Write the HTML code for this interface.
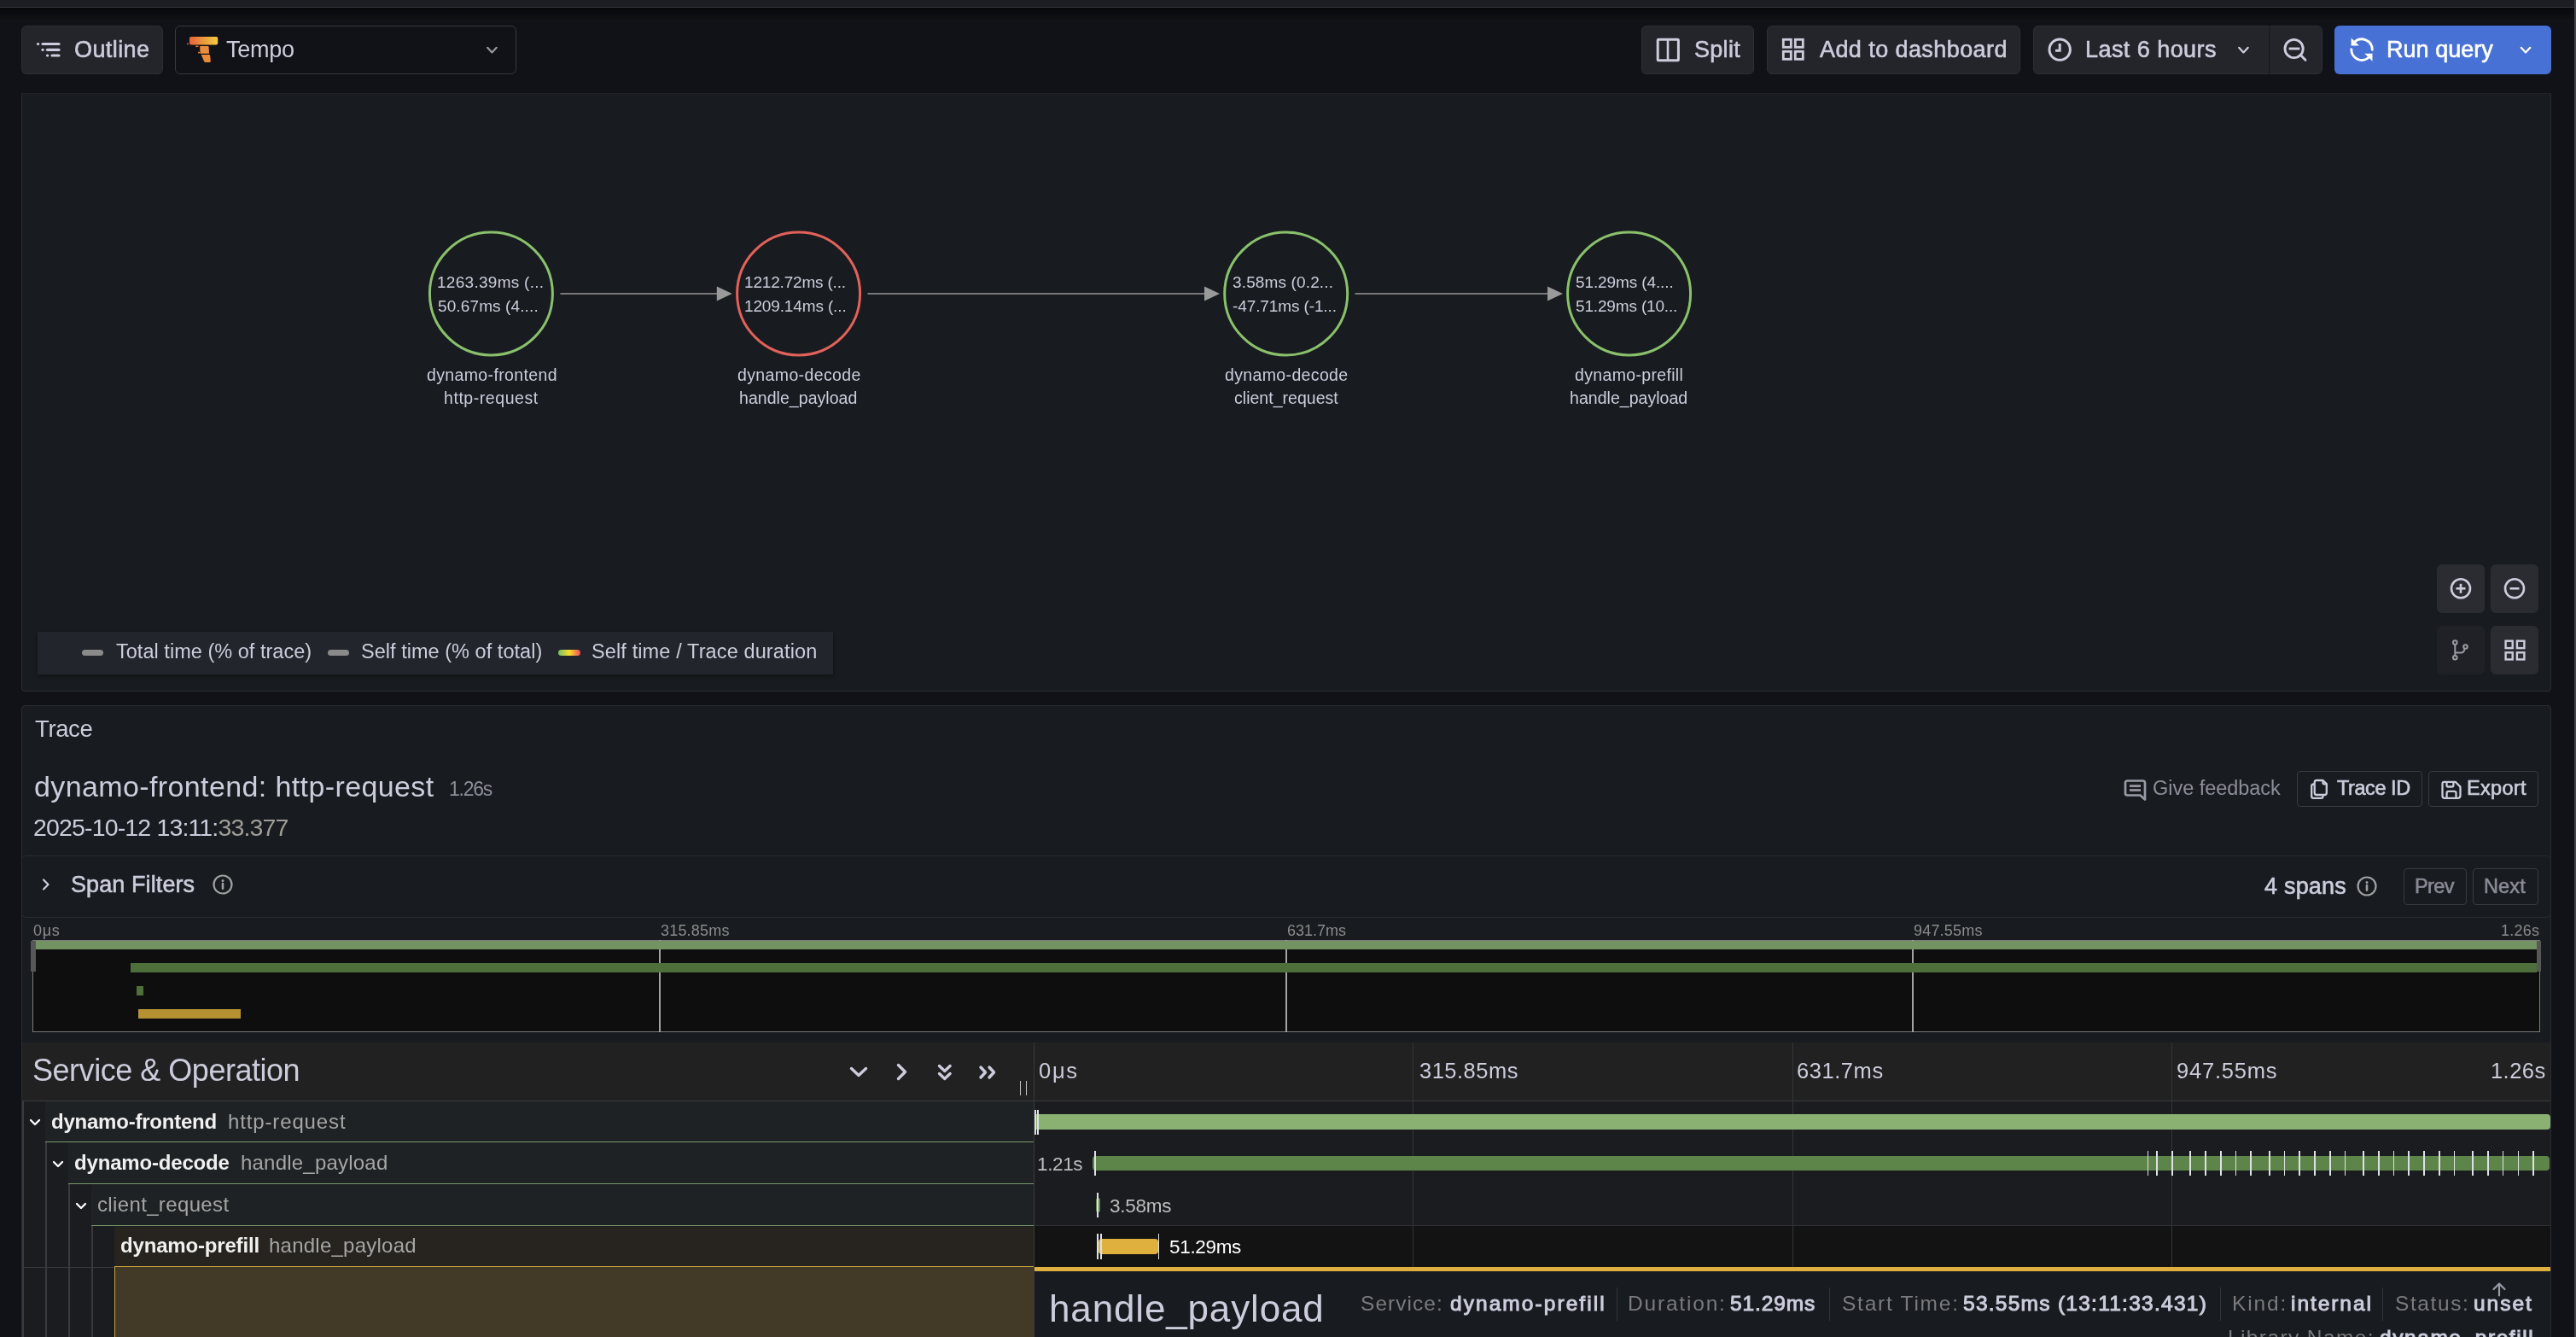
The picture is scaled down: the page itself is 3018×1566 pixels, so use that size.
<!DOCTYPE html>
<html><head><meta charset="utf-8"><style>
html,body{margin:0;padding:0;}
body{width:3018px;height:1566px;overflow:hidden;position:relative;background:#111217;font-family:"Liberation Sans",sans-serif;}
.t{position:absolute;white-space:nowrap;will-change:transform;font-family:"Liberation Sans",sans-serif;}
</style></head><body>
<div style="position:absolute;left:0.00px;top:0.00px;width:3018.00px;height:8.00px;background:#1d1e23"></div>
<div style="position:absolute;left:0.00px;top:8.00px;width:3018.00px;height:1.00px;background:#36373c"></div>
<div style="position:absolute;left:0.00px;top:9.00px;width:3018.00px;height:16.00px;background:linear-gradient(rgba(0,0,0,0.55),rgba(0,0,0,0))"></div>
<div style="position:absolute;left:25.00px;top:30.00px;width:166.00px;height:57.00px;background:#24252b;border:1px solid #2d2e34;border-radius:6px;box-sizing:border-box"></div>
<svg style="position:absolute;left:40.00px;top:44.00px;" width="34.00" height="28.00" viewBox="0 0 34 28" fill="none"><g stroke="#ccccdc" stroke-width="3.2" stroke-linecap="round"><line x1="4.5" y1="7.5" x2="4.6" y2="7.5"/><line x1="10" y1="7.5" x2="29" y2="7.5"/><line x1="10" y1="14.3" x2="10.1" y2="14.3"/><line x1="15.5" y1="14.3" x2="29" y2="14.3"/><line x1="15.5" y1="21" x2="15.6" y2="21"/><line x1="21" y1="21" x2="29" y2="21"/></g></svg>
<div class="t" style="left:87.00px;top:44.80px;font-size:27px;line-height:27px;letter-spacing:0.411px;color:#ccccdc;font-weight:400;;-webkit-text-stroke:0.60px #ccccdc">Outline</div>
<div style="position:absolute;left:205.00px;top:30.00px;width:400.00px;height:57.00px;border:1px solid #37383e;border-radius:6px;box-sizing:border-box"></div>
<svg style="position:absolute;left:217.00px;top:42.00px;" width="40.00" height="32.00" viewBox="0 0 40 32" fill="none"><defs><linearGradient id="tg" x1="0" x2="1" y1="0" y2="0"><stop offset="0" stop-color="#e9623a"/><stop offset="0.5" stop-color="#eb9a3c"/><stop offset="1" stop-color="#f4ca44"/></linearGradient></defs><rect x="5" y="0.9" width="33.2" height="9.5" rx="1.8" fill="url(#tg)"/><path d="M17.2 11.9 H26.3 Q27.5 11.9 27.6 13.2 L28 20.8 H17.5 Z" fill="#e98d3a"/><path d="M18.7 21.9 H27.8 Q29 21.9 29.2 23.2 L29.8 29.8 Q29.8 30.9 28.8 30.9 H23.6 Q22.4 30.9 22 29.8 Z" fill="#e98a3a"/><ellipse cx="3" cy="9.3" rx="1.1" ry="0.9" fill="#ea6a38"/><ellipse cx="13.8" cy="12.35" rx="1.9" ry="0.8" fill="#ea7a38"/><ellipse cx="16" cy="19.65" rx="1.2" ry="0.8" fill="#ea8238"/></svg>
<div class="t" style="left:264.80px;top:44.70px;font-size:27px;line-height:27px;letter-spacing:-0.231px;color:#ccccdc;font-weight:400;">Tempo</div>
<svg style="position:absolute;left:566.00px;top:52.00px;" width="20.00" height="14.00" viewBox="0 0 20 14" fill="none"><path d="M5.2 3.8 L10.4 9.4 L15.7 3.8" stroke="#9898a3" stroke-width="2.2" stroke-linecap="round" stroke-linejoin="round"/></svg>
<div style="position:absolute;left:1923.00px;top:30.00px;width:132.00px;height:57.00px;background:#24252b;border:1px solid #2d2e34;border-radius:6px;box-sizing:border-box"></div>
<svg style="position:absolute;left:1939.00px;top:43.00px;" width="30.00" height="31.00" viewBox="0 0 30 31" fill="none"><rect x="3.2" y="3.3" width="24.2" height="24.5" rx="1" stroke="#ccccdc" stroke-width="3"/><line x1="15" y1="3" x2="15" y2="28" stroke="#ccccdc" stroke-width="2.6"/></svg>
<div class="t" style="left:1984.80px;top:44.70px;font-size:27px;line-height:27px;letter-spacing:0.295px;color:#ccccdc;font-weight:400;;-webkit-text-stroke:0.60px #ccccdc">Split</div>
<div style="position:absolute;left:2070.00px;top:30.00px;width:297.00px;height:57.00px;background:#24252b;border:1px solid #2d2e34;border-radius:6px;box-sizing:border-box"></div>
<svg style="position:absolute;left:2086.00px;top:43.00px;" width="30.00" height="30.00" viewBox="0 0 30 30" fill="none"><g stroke="#ccccdc" stroke-width="2.8" fill="none"><rect x="3.3" y="3.3" width="9" height="9"/><rect x="17.3" y="3.3" width="9" height="9"/><rect x="3.3" y="17.3" width="9" height="9"/><rect x="17.3" y="17.3" width="9" height="9"/></g></svg>
<div class="t" style="left:2132.00px;top:44.70px;font-size:27px;line-height:27px;letter-spacing:0.417px;color:#ccccdc;font-weight:400;;-webkit-text-stroke:0.60px #ccccdc">Add to dashboard</div>
<div style="position:absolute;left:2382.00px;top:30.00px;width:339.00px;height:57.00px;background:#24252b;border:1px solid #2d2e34;border-radius:6px;box-sizing:border-box"></div>
<div style="position:absolute;left:2658.00px;top:30.00px;width:1.00px;height:57.00px;background:#17181c"></div>
<svg style="position:absolute;left:2397.00px;top:42.00px;" width="32.00" height="32.00" viewBox="0 0 32 32" fill="none"><circle cx="16.2" cy="16.1" r="12.2" stroke="#ccccdc" stroke-width="3"/><path d="M11 17.2 H16.2 V9" stroke="#ccccdc" stroke-width="3" fill="none"/></svg>
<div class="t" style="left:2442.70px;top:44.80px;font-size:27px;line-height:27px;letter-spacing:0.446px;color:#ccccdc;font-weight:400;;-webkit-text-stroke:0.60px #ccccdc">Last 6 hours</div>
<svg style="position:absolute;left:2619.00px;top:52.00px;" width="20.00" height="14.00" viewBox="0 0 20 14" fill="none"><path d="M4.2 3.8 L9.4 9.4 L14.7 3.8" stroke="#d0d0de" stroke-width="2.2" stroke-linecap="round" stroke-linejoin="round"/></svg>
<svg style="position:absolute;left:2673.00px;top:42.00px;" width="32.00" height="32.00" viewBox="0 0 32 32" fill="none"><circle cx="14.6" cy="15" r="10.6" stroke="#ccccdc" stroke-width="2.9"/><line x1="8.6" y1="15" x2="21.4" y2="15" stroke="#ccccdc" stroke-width="2.9"/><line x1="22.4" y1="22.6" x2="28" y2="28.3" stroke="#ccccdc" stroke-width="2.9" stroke-linecap="round"/></svg>
<div style="position:absolute;left:2735.00px;top:30.00px;width:254.00px;height:57.00px;background:#4871d6;border-radius:6px"></div>
<svg style="position:absolute;left:2751.00px;top:42.00px;" width="32.00" height="32.00" viewBox="0 0 32 32" fill="none"><path d="M7.2 7.6 A12.3 12.3 0 0 1 28.3 16.3" stroke="#fff" stroke-width="2.9" stroke-linecap="round"/><path d="M3.8 15.8 A12.3 12.3 0 0 0 25 24.6" stroke="#fff" stroke-width="2.9" stroke-linecap="round"/><path d="M3.6 2.4 V11.6 H13 Z" fill="#fff"/><path d="M28.5 29.8 V20.8 H19.3 Z" fill="#fff"/></svg>
<div class="t" style="left:2796.40px;top:44.80px;font-size:27px;line-height:27px;letter-spacing:0.029px;color:#ffffff;font-weight:400;;-webkit-text-stroke:0.60px #ffffff">Run query</div>
<svg style="position:absolute;left:2949.00px;top:52.00px;" width="20.00" height="14.00" viewBox="0 0 20 14" fill="none"><path d="M4.75 3.8 L10 9.4 L15.25 3.8" stroke="#ffffff" stroke-width="2.2" stroke-linecap="round" stroke-linejoin="round"/></svg>
<div style="position:absolute;left:25.00px;top:109.00px;width:2964.00px;height:701.00px;background:#181b1f;border:1px solid #2a2c31;border-top-color:#1f2126;border-radius:0 0 4px 4px;box-sizing:border-box"></div>
<div class="t" style="left:511.60px;top:321.20px;font-size:19px;line-height:19px;letter-spacing:0.279px;color:#ccccdc;font-weight:400;">1263.39ms (...</div>
<div class="t" style="left:512.60px;top:349.00px;font-size:19px;line-height:19px;letter-spacing:0.117px;color:#ccccdc;font-weight:400;">50.67ms (4....</div>
<div class="t" style="left:499.55px;top:429.55px;font-size:19.5px;line-height:19.5px;letter-spacing:0.366px;color:#ccccdc;font-weight:400;">dynamo-frontend</div>
<div class="t" style="left:519.50px;top:457.35px;font-size:19.5px;line-height:19.5px;letter-spacing:0.560px;color:#ccccdc;font-weight:400;">http-request</div>
<div class="t" style="left:871.80px;top:321.20px;font-size:19px;line-height:19px;letter-spacing:-0.182px;color:#ccccdc;font-weight:400;">1212.72ms (...</div>
<div class="t" style="left:871.80px;top:349.00px;font-size:19px;line-height:19px;letter-spacing:-0.136px;color:#ccccdc;font-weight:400;">1209.14ms (...</div>
<div class="t" style="left:863.85px;top:429.55px;font-size:19.5px;line-height:19.5px;letter-spacing:0.375px;color:#ccccdc;font-weight:400;">dynamo-decode</div>
<div class="t" style="left:866.35px;top:457.35px;font-size:19.5px;line-height:19.5px;letter-spacing:0.049px;color:#ccccdc;font-weight:400;">handle_payload</div>
<div class="t" style="left:1443.90px;top:321.20px;font-size:19px;line-height:19px;letter-spacing:0.140px;color:#ccccdc;font-weight:400;">3.58ms (0.2...</div>
<div class="t" style="left:1443.90px;top:349.00px;font-size:19px;line-height:19px;letter-spacing:-0.111px;color:#ccccdc;font-weight:400;">-47.71ms (-1...</div>
<div class="t" style="left:1435.05px;top:429.55px;font-size:19.5px;line-height:19.5px;letter-spacing:0.359px;color:#ccccdc;font-weight:400;">dynamo-decode</div>
<div class="t" style="left:1445.55px;top:457.35px;font-size:19.5px;line-height:19.5px;letter-spacing:0.024px;color:#ccccdc;font-weight:400;">client_request</div>
<div class="t" style="left:1845.80px;top:321.20px;font-size:19px;line-height:19px;letter-spacing:-0.114px;color:#ccccdc;font-weight:400;">51.29ms (4....</div>
<div class="t" style="left:1845.80px;top:349.00px;font-size:19px;line-height:19px;letter-spacing:-0.159px;color:#ccccdc;font-weight:400;">51.29ms (10...</div>
<div class="t" style="left:1845.35px;top:429.55px;font-size:19.5px;line-height:19.5px;letter-spacing:0.336px;color:#ccccdc;font-weight:400;">dynamo-prefill</div>
<div class="t" style="left:1839.45px;top:457.35px;font-size:19.5px;line-height:19.5px;letter-spacing:0.034px;color:#ccccdc;font-weight:400;">handle_payload</div>
<svg style="position:absolute;left:0.00px;top:0.00px;" width="3018.00" height="810.00" viewBox="0 0 3018 810" fill="none"><circle cx="575.4" cy="344" r="72" stroke="#8ac06c" stroke-width="3" fill="none"/><circle cx="935.6" cy="344" r="72" stroke="#e0625a" stroke-width="3" fill="none"/><circle cx="1506.7" cy="344" r="72" stroke="#8ac06c" stroke-width="3" fill="none"/><circle cx="1908.6" cy="344" r="72" stroke="#8ac06c" stroke-width="3" fill="none"/><line x1="656.5" y1="344" x2="841.8" y2="344" stroke="#9a9a9a" stroke-width="1.7"/><path d="M839.8 335.5 L857.8 344 L839.8 352.5 Z" fill="#9a9a9a"/><line x1="1016.5" y1="344" x2="1413" y2="344" stroke="#9a9a9a" stroke-width="1.7"/><path d="M1411 335.5 L1429 344 L1411 352.5 Z" fill="#9a9a9a"/><line x1="1587.5" y1="344" x2="1815" y2="344" stroke="#9a9a9a" stroke-width="1.7"/><path d="M1813 335.5 L1831 344 L1813 352.5 Z" fill="#9a9a9a"/></svg>
<div style="position:absolute;left:44.00px;top:740.00px;width:932.00px;height:50.00px;background:#22252b;box-shadow:0 2px 4px rgba(0,0,0,0.35)"></div>
<div style="position:absolute;left:95.80px;top:761.00px;width:25.20px;height:7.00px;background:#8a8a8a;border-radius:4px"></div>
<div class="t" style="left:136.00px;top:752.45px;font-size:23.5px;line-height:23.5px;letter-spacing:0.027px;color:#ccccdc;font-weight:400;">Total time (% of trace)</div>
<div style="position:absolute;left:384.00px;top:761.00px;width:24.80px;height:7.00px;background:#8a8a8a;border-radius:4px"></div>
<div class="t" style="left:423.00px;top:752.45px;font-size:23.5px;line-height:23.5px;letter-spacing:0.031px;color:#ccccdc;font-weight:400;">Self time (% of total)</div>
<div style="position:absolute;left:654.20px;top:761.00px;width:25.80px;height:7.00px;background:linear-gradient(90deg,#73bf69,#fade2a,#f2495c);border-radius:4px"></div>
<div class="t" style="left:693.00px;top:752.45px;font-size:23.5px;line-height:23.5px;letter-spacing:0.121px;color:#ccccdc;font-weight:400;">Self time / Trace duration</div>
<div style="position:absolute;left:2855.00px;top:661.00px;width:56.00px;height:57.00px;background:#2a2c32;border-radius:6px"></div>
<div style="position:absolute;left:2918.00px;top:661.00px;width:56.00px;height:57.00px;background:#2a2c32;border-radius:6px"></div>
<div style="position:absolute;left:2855.00px;top:733.00px;width:56.00px;height:57.00px;background:#1f2126;border-radius:6px"></div>
<div style="position:absolute;left:2918.00px;top:733.00px;width:56.00px;height:57.00px;background:#2a2c32;border-radius:6px"></div>
<svg style="position:absolute;left:2867.00px;top:677.00px;" width="32.00" height="32.00" viewBox="0 0 32 32" fill="none"><circle cx="16" cy="12.3" r="11" stroke="#ccccdc" stroke-width="2.6"/><line x1="10.5" y1="12.3" x2="21.5" y2="12.3" stroke="#ccccdc" stroke-width="2.6"/><line x1="16" y1="6.8" x2="16" y2="17.8" stroke="#ccccdc" stroke-width="2.6"/></svg>
<svg style="position:absolute;left:2930.00px;top:677.00px;" width="32.00" height="32.00" viewBox="0 0 32 32" fill="none"><circle cx="16" cy="12.3" r="11" stroke="#ccccdc" stroke-width="2.6"/><line x1="10.5" y1="12.3" x2="21.5" y2="12.3" stroke="#ccccdc" stroke-width="2.6"/></svg>
<svg style="position:absolute;left:2867.00px;top:748.00px;" width="32.00" height="32.00" viewBox="0 0 32 32" fill="none"><g stroke="#9b9ba6" stroke-width="2" fill="none"><circle cx="9.3" cy="4.6" r="2.3"/><circle cx="9.3" cy="22.3" r="2.3"/><circle cx="21.5" cy="9.5" r="2.3"/><line x1="9.3" y1="7" x2="9.3" y2="20"/><path d="M9.3 16.5 H16.5 Q20 16.5 20.6 11.6"/></g></svg>
<svg style="position:absolute;left:2930.00px;top:748.00px;" width="32.00" height="32.00" viewBox="0 0 32 32" fill="none"><g stroke="#ccccdc" stroke-width="2.4" fill="none"><rect x="5.6" y="2.7" width="8.1" height="8.4"/><rect x="18.9" y="2.7" width="8.5" height="8.4"/><rect x="5.6" y="16.3" width="8.1" height="8.1"/><rect x="18.9" y="16.3" width="8.5" height="8.1"/></g></svg>
<div style="position:absolute;left:25.00px;top:825.50px;width:2964.00px;height:760.00px;background:#181b1f;border:1px solid #2a2c31;border-radius:4px;box-sizing:border-box"></div>
<div class="t" style="left:41.00px;top:839.75px;font-size:27.5px;line-height:27.5px;letter-spacing:-0.370px;color:#ccccdc;font-weight:400;">Trace</div>
<div class="t" style="left:40.00px;top:903.50px;font-size:34px;line-height:34px;letter-spacing:0.385px;color:#ccccdc;font-weight:400;">dynamo-frontend: http-request</div>
<div class="t" style="left:525.60px;top:913.00px;font-size:23px;line-height:23px;letter-spacing:-1.266px;color:#8e8e9a;font-weight:400;">1.26s</div>
<div class="t" style="left:38.80px;top:955.35px;font-size:28.5px;line-height:28.5px;letter-spacing:-0.847px;color:#ccccdc;font-weight:400;">2025-10-12 13:11:<span style="color:#a09e98">33.377</span></div>
<svg style="position:absolute;left:2486.00px;top:910.00px;" width="30.00" height="30.00" viewBox="0 0 30 30" fill="none"><g stroke="#9a9aa6" stroke-width="2.7" fill="none" stroke-linejoin="round"><path d="M6.5 4.5 H24.5 Q27 4.5 27 7 V26.5 L21.5 21.5 H6.5 Q4 21.5 4 19 V7 Q4 4.5 6.5 4.5 Z"/><line x1="9" y1="10.6" x2="22" y2="10.6"/><line x1="9" y1="15.5" x2="22" y2="15.5"/></g></svg>
<div class="t" style="left:2521.80px;top:911.85px;font-size:23.5px;line-height:23.5px;letter-spacing:-0.040px;color:#8e8e9a;font-weight:400;">Give feedback</div>
<div style="position:absolute;left:2691.40px;top:903.20px;width:146.60px;height:42.20px;border:1px solid #3a3b41;border-radius:4px;box-sizing:border-box"></div>
<svg style="position:absolute;left:2704.00px;top:910.00px;" width="28.00" height="28.00" viewBox="0 0 28 28" fill="none"><g stroke="#ccccdc" stroke-width="2.3" fill="none" stroke-linejoin="round"><path d="M7.8 8.5 H6.5 Q4.2 8.5 4.2 11 V22.5 Q4.2 24.9 6.5 24.9 H15.5 Q17.5 24.9 17.5 22.8 V21.5"/><path d="M10 4 H17.5 L21.8 8 V18.5 Q21.8 21 19.5 21 H10 Q7.7 21 7.7 18.5 V6.5 Q7.7 4 10 4 Z"/><path d="M17.5 4 V6.8 Q17.5 8.3 19 8.3 H21.8"/></g></svg>
<div class="t" style="left:2737.70px;top:911.85px;font-size:23.5px;line-height:23.5px;letter-spacing:-0.437px;color:#ccccdc;font-weight:400;;-webkit-text-stroke:0.60px #ccccdc">Trace ID</div>
<div style="position:absolute;left:2845.20px;top:903.20px;width:128.70px;height:42.20px;border:1px solid #3a3b41;border-radius:4px;box-sizing:border-box"></div>
<svg style="position:absolute;left:2858.00px;top:912.00px;" width="26.00" height="26.00" viewBox="0 0 26 26" fill="none"><g stroke="#ccccdc" stroke-width="2.3" fill="none" stroke-linejoin="round"><path d="M5.5 3.8 H18.7 L24.5 9.6 V19.8 Q24.5 22.8 21.5 22.8 H6 Q3.5 22.8 3.5 20 V6 Q3.5 3.8 5.5 3.8 Z"/><path d="M8.5 4 V8.3 Q8.5 9.5 9.7 9.5 H15 Q16.4 9.5 16.4 8.3 V4"/><path d="M8.6 22.7 V17 Q8.6 14.9 10.8 14.9 H17.3 Q19.5 14.9 19.5 17 V22.7"/></g></svg>
<div class="t" style="left:2890.00px;top:911.85px;font-size:23.5px;line-height:23.5px;letter-spacing:0.322px;color:#ccccdc;font-weight:400;;-webkit-text-stroke:0.60px #ccccdc">Export</div>
<div style="position:absolute;left:25.00px;top:1002.00px;width:2964.00px;height:72.50px;border-top:1px solid #2a2c31;border-bottom:1px solid #2a2c31;border-radius:6px;box-sizing:border-box"></div>
<svg style="position:absolute;left:46.00px;top:1028.00px;" width="16.00" height="16.00" viewBox="0 0 16 16" fill="none"><path d="M5 2.5 L10.5 8 L5 13.5" stroke="#ccccdc" stroke-width="2.2" fill="none" stroke-linecap="round" stroke-linejoin="round"/></svg>
<div class="t" style="left:83.40px;top:1022.60px;font-size:27px;line-height:27px;letter-spacing:0.095px;color:#ccccdc;font-weight:400;;-webkit-text-stroke:0.60px #ccccdc">Span Filters</div>
<svg style="position:absolute;left:249.20px;top:1024.30px;" width="24.00" height="24.00" viewBox="0 0 24 24" fill="none"><circle cx="12" cy="12" r="10.5" stroke="#a0a0a0" stroke-width="2.2" fill="none"/><line x1="12" y1="11" x2="12" y2="16.8" stroke="#a0a0a0" stroke-width="2.6" stroke-linecap="round"/><circle cx="12" cy="7.5" r="1.5" fill="#a0a0a0"/></svg>
<div class="t" style="left:2652.70px;top:1024.60px;font-size:27px;line-height:27px;letter-spacing:0.206px;color:#ccccdc;font-weight:400;;-webkit-text-stroke:0.60px #ccccdc">4 spans</div>
<svg style="position:absolute;left:2760.50px;top:1026.00px;" width="24.00" height="24.00" viewBox="0 0 24 24" fill="none"><circle cx="12" cy="12" r="10.5" stroke="#a0a0a0" stroke-width="2.2" fill="none"/><line x1="12" y1="11" x2="12" y2="16.8" stroke="#a0a0a0" stroke-width="2.6" stroke-linecap="round"/><circle cx="12" cy="7.5" r="1.5" fill="#a0a0a0"/></svg>
<div style="position:absolute;left:2816.30px;top:1017.30px;width:73.30px;height:42.50px;border:1px solid #3a3b41;border-radius:4px;box-sizing:border-box"></div>
<div style="position:absolute;left:2897.30px;top:1017.30px;width:76.70px;height:42.50px;border:1px solid #3a3b41;border-radius:4px;box-sizing:border-box"></div>
<div class="t" style="left:2829.00px;top:1026.75px;font-size:23.5px;line-height:23.5px;letter-spacing:-0.590px;color:#8a8a96;font-weight:400;;-webkit-text-stroke:0.60px #8a8a96">Prev</div>
<div class="t" style="left:2910.20px;top:1026.75px;font-size:23.5px;line-height:23.5px;letter-spacing:0.136px;color:#8a8a96;font-weight:400;;-webkit-text-stroke:0.60px #8a8a96">Next</div>
<div class="t" style="left:39.00px;top:1080.80px;font-size:18px;line-height:18px;letter-spacing:0.659px;color:#8b8b8b;font-weight:400;">0μs</div>
<div class="t" style="left:773.90px;top:1080.80px;font-size:18px;line-height:18px;letter-spacing:0.193px;color:#8b8b8b;font-weight:400;">315.85ms</div>
<div class="t" style="left:1508.00px;top:1080.80px;font-size:18px;line-height:18px;letter-spacing:-0.006px;color:#8b8b8b;font-weight:400;">631.7ms</div>
<div class="t" style="left:2242.40px;top:1080.80px;font-size:18px;line-height:18px;letter-spacing:0.193px;color:#8b8b8b;font-weight:400;">947.55ms</div>
<div class="t" style="left:2930.30px;top:1080.80px;font-size:18px;line-height:18px;letter-spacing:0.242px;color:#8b8b8b;font-weight:400;">1.26s</div>
<div style="position:absolute;left:38.30px;top:1101.00px;width:2937.50px;height:107.50px;background:#0e0e0f;border:1px solid #7b7b7b;box-sizing:border-box"></div>
<div style="position:absolute;left:772.00px;top:1101.00px;width:2.00px;height:107.50px;background:#a3a3a3"></div>
<div style="position:absolute;left:1505.80px;top:1101.00px;width:2.00px;height:107.50px;background:#a3a3a3"></div>
<div style="position:absolute;left:2239.50px;top:1101.00px;width:2.00px;height:107.50px;background:#a3a3a3"></div>
<div style="position:absolute;left:41.70px;top:1102.00px;width:2930.30px;height:9.90px;background:#739462"></div>
<div style="position:absolute;left:153.00px;top:1128.00px;width:2819.00px;height:10.60px;background:#4e6e3a"></div>
<div style="position:absolute;left:159.80px;top:1155.00px;width:8.50px;height:10.80px;background:#4e6e3a"></div>
<div style="position:absolute;left:162.40px;top:1181.80px;width:119.60px;height:10.90px;background:#b59132"></div>
<div style="position:absolute;left:36.00px;top:1101.80px;width:5.70px;height:36.10px;background:#575757"></div>
<div style="position:absolute;left:2972.00px;top:1102.00px;width:4.70px;height:36.00px;background:#575757"></div>
<div style="position:absolute;left:26.00px;top:1220.50px;width:2962.00px;height:68.50px;background:#212121"></div>
<div style="position:absolute;left:26.00px;top:1289.00px;width:2962.00px;height:1.00px;background:#3b3b3b"></div>
<div class="t" style="left:38.40px;top:1236.10px;font-size:36px;line-height:36px;letter-spacing:-0.474px;color:#ccccdc;font-weight:400;">Service &amp; Operation</div>
<svg style="position:absolute;left:993.00px;top:1246.00px;" width="26.00" height="20.00" viewBox="0 0 26 20" fill="none"><path d="M4.5 5.5 L13 13.5 L21.5 5.5" stroke="#ccccdc" stroke-width="3.4" fill="none" stroke-linecap="round" stroke-linejoin="round"/></svg>
<svg style="position:absolute;left:1047.00px;top:1243.00px;" width="20.00" height="26.00" viewBox="0 0 20 26" fill="none"><path d="M5.5 4.5 L13.5 12.5 L5.5 20.5" stroke="#ccccdc" stroke-width="3.4" fill="none" stroke-linecap="round" stroke-linejoin="round"/></svg>
<svg style="position:absolute;left:1096.00px;top:1244.50px;" width="22.00" height="26.00" viewBox="0 0 22 26" fill="none"><g stroke="#ccccdc" stroke-width="3.4" fill="none" stroke-linecap="round" stroke-linejoin="round"><path d="M4.5 3.5 L10.8 9.5 L17.1 3.5"/><path d="M4.5 12.5 L10.8 18.5 L17.1 12.5"/></g></svg>
<svg style="position:absolute;left:1145.00px;top:1243.80px;" width="26.00" height="24.00" viewBox="0 0 26 24" fill="none"><g stroke="#ccccdc" stroke-width="3.4" fill="none" stroke-linecap="round" stroke-linejoin="round"><path d="M4 6 L9.5 12 L4 18"/><path d="M14 6 L19.5 12 L14 18"/></g></svg>
<div style="position:absolute;left:1194.50px;top:1266.00px;width:1.30px;height:16.60px;background:#c4c4c4"></div>
<div style="position:absolute;left:1201.50px;top:1266.00px;width:1.30px;height:16.60px;background:#c4c4c4"></div>
<div style="position:absolute;left:1211.00px;top:1220.50px;width:1.00px;height:345.50px;background:#393939"></div>
<div class="t" style="left:1217.00px;top:1242.25px;font-size:25.5px;line-height:25.5px;letter-spacing:1.713px;color:#ccccdc;font-weight:400;">0μs</div>
<div class="t" style="left:1662.50px;top:1242.25px;font-size:25.5px;line-height:25.5px;letter-spacing:0.495px;color:#ccccdc;font-weight:400;">315.85ms</div>
<div class="t" style="left:2105.00px;top:1242.25px;font-size:25.5px;line-height:25.5px;letter-spacing:0.558px;color:#ccccdc;font-weight:400;">631.7ms</div>
<div class="t" style="left:2550.20px;top:1242.25px;font-size:25.5px;line-height:25.5px;letter-spacing:0.795px;color:#ccccdc;font-weight:400;">947.55ms</div>
<div class="t" style="left:2918.20px;top:1242.25px;font-size:25.5px;line-height:25.5px;letter-spacing:0.442px;color:#ccccdc;font-weight:400;">1.26s</div>
<div style="position:absolute;left:26.00px;top:1290.00px;width:1185.00px;height:276.00px;background:#1b1c20"></div>
<div style="position:absolute;left:1212.00px;top:1290.00px;width:1776.00px;height:146.00px;background:#1b1c20"></div>
<div style="position:absolute;left:1212.00px;top:1436.00px;width:1776.00px;height:48.50px;background:#131313"></div>
<div style="position:absolute;left:53.00px;top:1290.00px;width:1158.00px;height:47.00px;background:#1f2224"></div>
<div style="position:absolute;left:53.00px;top:1337.00px;width:1158.00px;height:1.00px;background:#76996a"></div>
<div style="position:absolute;left:80.30px;top:1338.00px;width:1130.70px;height:48.00px;background:#1f2224"></div>
<div style="position:absolute;left:80.30px;top:1386.00px;width:1130.70px;height:1.00px;background:#76996a"></div>
<div style="position:absolute;left:107.30px;top:1387.00px;width:1103.70px;height:48.00px;background:#1f2224"></div>
<div style="position:absolute;left:107.30px;top:1435.00px;width:1103.70px;height:1.00px;background:#76996a"></div>
<div style="position:absolute;left:133.80px;top:1436.80px;width:1077.20px;height:46.80px;background:#272420"></div>
<div style="position:absolute;left:26.00px;top:1290.00px;width:2.00px;height:276.00px;background:#3a3a3c"></div>
<div style="position:absolute;left:53.00px;top:1338.00px;width:2.00px;height:228.00px;background:#3a3a3c"></div>
<div style="position:absolute;left:80.00px;top:1387.00px;width:2.00px;height:179.00px;background:#3a3a3c"></div>
<div style="position:absolute;left:107.00px;top:1436.00px;width:2.00px;height:130.00px;background:#3a3a3c"></div>
<div style="position:absolute;left:26.00px;top:1484.00px;width:108.00px;height:1.40px;background:#3a3a3c"></div>
<div style="position:absolute;left:1655.20px;top:1220.50px;width:1.00px;height:263.50px;background:#333538"></div>
<div style="position:absolute;left:2099.50px;top:1220.50px;width:1.00px;height:263.50px;background:#333538"></div>
<div style="position:absolute;left:2544.00px;top:1220.50px;width:1.00px;height:263.50px;background:#333538"></div>
<div style="position:absolute;left:1212.00px;top:1435.20px;width:1776.00px;height:1.00px;background:#2f3033"></div>
<svg style="position:absolute;left:33.00px;top:1308.00px;" width="16.00" height="14.00" viewBox="0 0 16 14" fill="none"><path d="M3 4 L8 9 L13 4" stroke="#ffffff" stroke-width="2.3" fill="none" stroke-linecap="round" stroke-linejoin="round"/></svg>
<svg style="position:absolute;left:60.00px;top:1357.30px;" width="16.00" height="14.00" viewBox="0 0 16 14" fill="none"><path d="M3 4 L8 9 L13 4" stroke="#ffffff" stroke-width="2.3" fill="none" stroke-linecap="round" stroke-linejoin="round"/></svg>
<svg style="position:absolute;left:87.40px;top:1406.00px;" width="16.00" height="14.00" viewBox="0 0 16 14" fill="none"><path d="M3 4 L8 9 L13 4" stroke="#ffffff" stroke-width="2.3" fill="none" stroke-linecap="round" stroke-linejoin="round"/></svg>
<div class="t" style="left:60.40px;top:1301.80px;font-size:24px;line-height:24px;letter-spacing:-0.226px;color:#f0f0f0;font-weight:700;">dynamo-frontend</div>
<div class="t" style="left:267.40px;top:1301.80px;font-size:24px;line-height:24px;letter-spacing:0.863px;color:#a5a5a5;font-weight:400;">http-request</div>
<div class="t" style="left:87.30px;top:1349.90px;font-size:24px;line-height:24px;letter-spacing:-0.174px;color:#f0f0f0;font-weight:700;">dynamo-decode</div>
<div class="t" style="left:281.90px;top:1349.90px;font-size:24px;line-height:24px;letter-spacing:0.212px;color:#a5a5a5;font-weight:400;">handle_payload</div>
<div class="t" style="left:113.60px;top:1398.80px;font-size:24px;line-height:24px;letter-spacing:0.357px;color:#a5a5a5;font-weight:400;">client_request</div>
<div class="t" style="left:141.20px;top:1447.10px;font-size:24px;line-height:24px;letter-spacing:-0.176px;color:#f0f0f0;font-weight:700;">dynamo-prefill</div>
<div class="t" style="left:315.20px;top:1447.10px;font-size:24px;line-height:24px;letter-spacing:0.243px;color:#a5a5a5;font-weight:400;">handle_payload</div>
<div style="position:absolute;left:133.80px;top:1484.00px;width:1077.20px;height:82.00px;background:#423a27"></div>
<div style="position:absolute;left:133.80px;top:1483.00px;width:1077.20px;height:1.00px;background:#c9a23c"></div>
<div style="position:absolute;left:133.80px;top:1484.00px;width:1.00px;height:82.00px;background:#c9a23c"></div>
<div style="position:absolute;left:1212.00px;top:1305.00px;width:1775.80px;height:17.70px;background:#8ab172;border-radius:0 4px 4px 0"></div>
<div style="position:absolute;left:1212.00px;top:1300.00px;width:1.60px;height:28.70px;background:#dde0e6"></div>
<div style="position:absolute;left:1215.20px;top:1300.00px;width:1.60px;height:28.70px;background:#dde0e6"></div>
<div class="t" style="left:1215.30px;top:1352.65px;font-size:22.5px;line-height:22.5px;letter-spacing:-0.373px;color:#bdbdbd;font-weight:400;">1.21s</div>
<div style="position:absolute;left:1280.20px;top:1353.80px;width:1706.60px;height:17.00px;background:#5e8549;border-radius:4px"></div>
<div style="position:absolute;left:1282.30px;top:1348.00px;width:1.60px;height:28.50px;background:#dde0e6"></div>
<div style="position:absolute;left:2515.50px;top:1348.20px;width:1.50px;height:28.40px;background:#dde0e6"></div>
<div style="position:absolute;left:2526.20px;top:1348.20px;width:1.50px;height:28.40px;background:#dde0e6"></div>
<div style="position:absolute;left:2544.20px;top:1348.20px;width:1.50px;height:28.40px;background:#dde0e6"></div>
<div style="position:absolute;left:2565.20px;top:1348.20px;width:1.50px;height:28.40px;background:#dde0e6"></div>
<div style="position:absolute;left:2583.20px;top:1348.20px;width:1.50px;height:28.40px;background:#dde0e6"></div>
<div style="position:absolute;left:2601.20px;top:1348.20px;width:1.50px;height:28.40px;background:#dde0e6"></div>
<div style="position:absolute;left:2618.80px;top:1348.20px;width:1.50px;height:28.40px;background:#dde0e6"></div>
<div style="position:absolute;left:2636.40px;top:1348.20px;width:1.50px;height:28.40px;background:#dde0e6"></div>
<div style="position:absolute;left:2658.10px;top:1348.20px;width:1.50px;height:28.40px;background:#dde0e6"></div>
<div style="position:absolute;left:2675.70px;top:1348.20px;width:1.50px;height:28.40px;background:#dde0e6"></div>
<div style="position:absolute;left:2693.30px;top:1348.20px;width:1.50px;height:28.40px;background:#dde0e6"></div>
<div style="position:absolute;left:2711.30px;top:1348.20px;width:1.50px;height:28.40px;background:#dde0e6"></div>
<div style="position:absolute;left:2729.10px;top:1348.20px;width:1.50px;height:28.40px;background:#dde0e6"></div>
<div style="position:absolute;left:2746.90px;top:1348.20px;width:1.50px;height:28.40px;background:#dde0e6"></div>
<div style="position:absolute;left:2768.30px;top:1348.20px;width:1.50px;height:28.40px;background:#dde0e6"></div>
<div style="position:absolute;left:2786.30px;top:1348.20px;width:1.50px;height:28.40px;background:#dde0e6"></div>
<div style="position:absolute;left:2803.90px;top:1348.20px;width:1.50px;height:28.40px;background:#dde0e6"></div>
<div style="position:absolute;left:2821.30px;top:1348.20px;width:1.50px;height:28.40px;background:#dde0e6"></div>
<div style="position:absolute;left:2839.30px;top:1348.20px;width:1.50px;height:28.40px;background:#dde0e6"></div>
<div style="position:absolute;left:2857.30px;top:1348.20px;width:1.50px;height:28.40px;background:#dde0e6"></div>
<div style="position:absolute;left:2874.90px;top:1348.20px;width:1.50px;height:28.40px;background:#dde0e6"></div>
<div style="position:absolute;left:2896.20px;top:1348.20px;width:1.50px;height:28.40px;background:#dde0e6"></div>
<div style="position:absolute;left:2914.30px;top:1348.20px;width:1.50px;height:28.40px;background:#dde0e6"></div>
<div style="position:absolute;left:2931.50px;top:1348.20px;width:1.50px;height:28.40px;background:#dde0e6"></div>
<div style="position:absolute;left:2949.50px;top:1348.20px;width:1.50px;height:28.40px;background:#dde0e6"></div>
<div style="position:absolute;left:2967.30px;top:1348.20px;width:1.50px;height:28.40px;background:#dde0e6"></div>
<div style="position:absolute;left:1284.00px;top:1402.80px;width:5.00px;height:17.10px;background:#5e8549;border-radius:3px"></div>
<div style="position:absolute;left:1285.00px;top:1397.00px;width:2.00px;height:29.00px;background:#dde0e6"></div>
<div class="t" style="left:1299.90px;top:1402.35px;font-size:22.5px;line-height:22.5px;letter-spacing:-0.267px;color:#bdbdbd;font-weight:400;">3.58ms</div>
<div style="position:absolute;left:1286.70px;top:1451.00px;width:70.30px;height:18.00px;background:#e0b03f;border-radius:4px"></div>
<div style="position:absolute;left:1284.90px;top:1445.10px;width:2.20px;height:29.90px;background:#dde0e6"></div>
<div style="position:absolute;left:1289.00px;top:1445.10px;width:2.20px;height:29.90px;background:#dde0e6"></div>
<div style="position:absolute;left:1357.00px;top:1445.10px;width:1.00px;height:29.90px;background:#dde0e6"></div>
<div class="t" style="left:1369.80px;top:1450.25px;font-size:22.5px;line-height:22.5px;letter-spacing:-0.325px;color:#ffffff;font-weight:400;">51.29ms</div>
<div style="position:absolute;left:1212.00px;top:1484.00px;width:1776.00px;height:5.00px;background:#e0b03f"></div>
<div class="t" style="left:1229.10px;top:1511.10px;font-size:44px;line-height:44px;letter-spacing:0.849px;color:#ccccdc;font-weight:400;">handle_payload</div>
<div class="t" style="left:1593.80px;top:1514.95px;font-size:24.5px;line-height:24.5px;letter-spacing:1.044px;color:#7b7b7d;font-weight:400;">Service:</div>
<div class="t" style="left:1698.60px;top:1514.95px;font-size:24.5px;line-height:24.5px;letter-spacing:2.060px;color:#ccccdc;font-weight:400;;-webkit-text-stroke:1.00px #ccccdc">dynamo-prefill</div>
<div style="position:absolute;left:1894.00px;top:1508.40px;width:1.00px;height:38.50px;background:#33343a"></div>
<div class="t" style="left:1907.30px;top:1514.95px;font-size:24.5px;line-height:24.5px;letter-spacing:1.812px;color:#7b7b7d;font-weight:400;">Duration:</div>
<div class="t" style="left:2027.00px;top:1514.95px;font-size:24.5px;line-height:24.5px;letter-spacing:0.880px;color:#ccccdc;font-weight:400;;-webkit-text-stroke:1.00px #ccccdc">51.29ms</div>
<div style="position:absolute;left:2143.30px;top:1508.40px;width:1.00px;height:38.50px;background:#33343a"></div>
<div class="t" style="left:2157.80px;top:1514.95px;font-size:24.5px;line-height:24.5px;letter-spacing:1.752px;color:#7b7b7d;font-weight:400;">Start Time:</div>
<div class="t" style="left:2300.30px;top:1514.95px;font-size:24.5px;line-height:24.5px;letter-spacing:1.263px;color:#ccccdc;font-weight:400;;-webkit-text-stroke:1.00px #ccccdc">53.55ms (13:11:33.431)</div>
<div style="position:absolute;left:2601.30px;top:1508.40px;width:1.00px;height:38.50px;background:#33343a"></div>
<div class="t" style="left:2614.70px;top:1514.95px;font-size:24.5px;line-height:24.5px;letter-spacing:1.891px;color:#7b7b7d;font-weight:400;">Kind:</div>
<div class="t" style="left:2683.50px;top:1514.95px;font-size:24.5px;line-height:24.5px;letter-spacing:1.941px;color:#ccccdc;font-weight:400;;-webkit-text-stroke:1.00px #ccccdc">internal</div>
<div style="position:absolute;left:2791.40px;top:1508.40px;width:1.00px;height:38.50px;background:#33343a"></div>
<div class="t" style="left:2806.40px;top:1514.95px;font-size:24.5px;line-height:24.5px;letter-spacing:1.591px;color:#7b7b7d;font-weight:400;">Status:</div>
<div class="t" style="left:2898.00px;top:1514.95px;font-size:24.5px;line-height:24.5px;letter-spacing:1.968px;color:#ccccdc;font-weight:400;;-webkit-text-stroke:1.00px #ccccdc">unset</div>
<svg style="position:absolute;left:2916.00px;top:1500.00px;" width="24.00" height="20.00" viewBox="0 0 24 20" fill="none"><path d="M12 17.5 V3.5 M5.5 10 L12 3.5 L18.5 10" stroke="#9a9aa6" stroke-width="2.2" fill="none" stroke-linecap="round" stroke-linejoin="round"/></svg>
<div class="t" style="left:2610.30px;top:1554.55px;font-size:24.5px;line-height:24.5px;letter-spacing:1.388px;color:#7b7b7d;font-weight:400;">Library Name:</div>
<div class="t" style="left:2787.80px;top:1554.55px;font-size:24.5px;line-height:24.5px;letter-spacing:1.562px;color:#ccccdc;font-weight:400;;-webkit-text-stroke:1.00px #ccccdc">dynamo_prefill</div>
<div style="position:absolute;left:3016.00px;top:0.00px;width:2.00px;height:1566.00px;background:#444549"></div>
</body></html>
